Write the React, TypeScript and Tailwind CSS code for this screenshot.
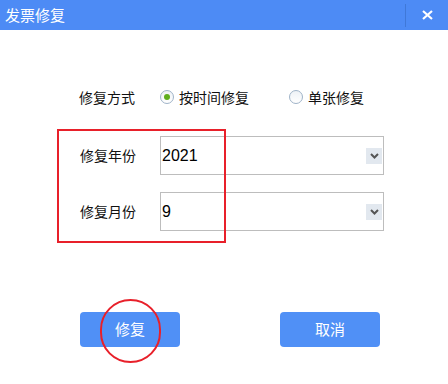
import React from 'react';

const font = { fontFamily: '"Noto Sans CJK SC", "Noto Sans", sans-serif' };

function Radio({ checked, label }: { checked?: boolean; label: string }) {
  return (
    <label className="flex items-center gap-[5px] text-[14px] text-[#111]">
      <span className="w-[14px] h-[14px] rounded-full border border-[#9fb3c8] bg-gradient-to-b from-[#eef2f6] to-white flex items-center justify-center">
        {checked && <span className="w-[6px] h-[6px] rounded-full bg-[#5fae1d]" />}
      </span>
      <span>{label}</span>
    </label>
  );
}

function Select({ value }: { value: string }) {
  return (
    <div className="w-[224px] h-[39px] border border-[#bdbdbd] bg-white flex items-center justify-between pr-px">
      <span className="pl-px text-[16px] text-black" style={{ fontFamily: '"Liberation Sans", sans-serif' }}>
        {value}
      </span>
      <span className="w-[16px] h-[16px] bg-[#e2e8ef] flex items-center justify-center">
        <svg width="9" height="6" viewBox="0 0 9 6">
          <path d="M1 1 L4.5 4.5 L8 1" stroke="#555" strokeWidth="2" fill="none" />
        </svg>
      </span>
    </div>
  );
}

export default function App() {
  return (
    <div className="relative w-[448px] h-[384px] bg-white overflow-hidden" style={font}>
      {/* Title bar */}
      <div className="h-[30px] bg-[#4d8bf5] flex items-center justify-between">
        <span className="pl-[5px] text-[15px] text-white">发票修复</span>
        <div className="flex items-center h-full">
          <div className="w-px h-[23px] bg-[#3f78d8]" />
          <button className="w-[42px] h-full flex items-center justify-center">
            <svg width="11" height="10" viewBox="0 0 11 10">
              <path d="M1 1 L10 9 M10 1 L1 9" stroke="white" strokeWidth="2.2" />
            </svg>
          </button>
        </div>
      </div>

      <div className="pl-[79px] pt-[55px]">
        {/* Repair mode */}
        <div className="flex items-center h-[24px]">
          <span className="w-[81px] text-[14px] text-[#111]">修复方式</span>
          <div className="w-[129px]">
            <Radio checked label="按时间修复" />
          </div>
          <Radio label="单张修复" />
        </div>

        {/* Year / month */}
        <div className="mt-[27px] flex flex-col gap-[17px]">
          <div className="flex items-center">
            <span className="w-[81px] pl-px text-[14px] text-[#111]">修复年份</span>
            <Select value="2021" />
          </div>
          <div className="flex items-center">
            <span className="w-[81px] pl-px text-[14px] text-[#111]">修复月份</span>
            <Select value="9" />
          </div>
        </div>

        {/* Buttons */}
        <div className="mt-[81px] pl-px flex gap-[100px]">
          <button className="w-[100px] h-[35px] rounded-[4px] bg-[#5090f6] text-white text-[15px]">修复</button>
          <button className="w-[100px] h-[35px] rounded-[4px] bg-[#5090f6] text-white text-[15px]">取消</button>
        </div>
      </div>

      {/* Annotations */}
      <div className="absolute left-[57px] top-[129px] w-[169px] h-[114px] border-2 border-[#e8202a]" />
      <div className="absolute left-[100px] top-[299px] w-[61px] h-[64px] rounded-full border-2 border-[#e8202a]" />
    </div>
  );
}
